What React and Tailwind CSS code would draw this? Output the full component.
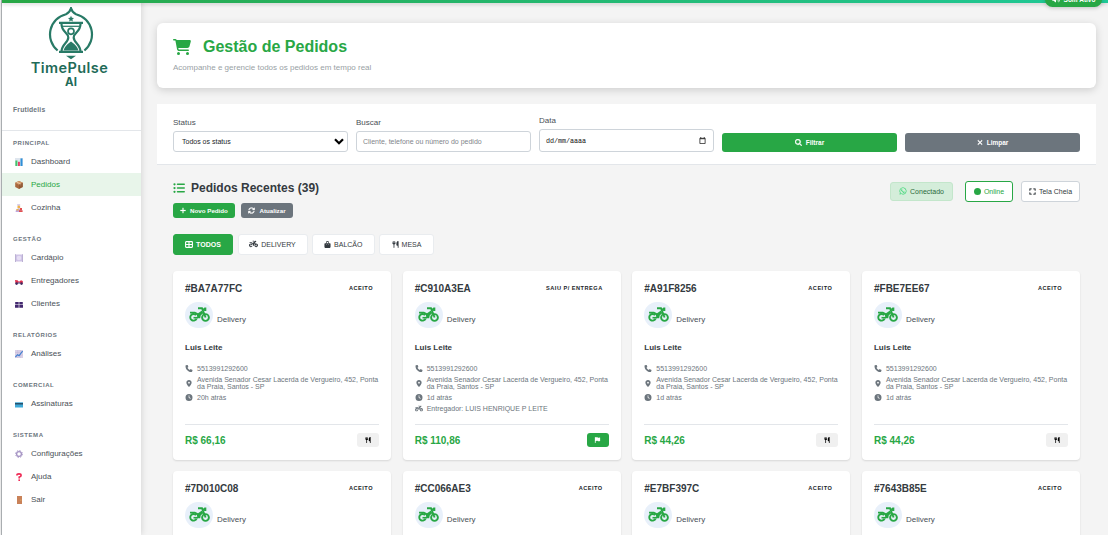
import React from "react";
import {
  FaCartShopping, FaListUl, FaPlus, FaArrowsRotate, FaMotorcycle, FaBagShopping, FaUtensils, FaPhone,
  FaLocationDot, FaClock, FaFlag, FaWhatsapp, FaExpand, FaCircle, FaMagnifyingGlass, FaXmark, FaVolumeHigh,
} from "react-icons/fa6";

function Logo() {
  return (
    <svg className="h-[53px] w-[46px]" viewBox="0 0 46 53" fill="none" stroke="#287a66" strokeWidth="2.200">
      <path d="M9.600 43.500A20.800 20.800 0 0 1 18 7.200Q21.800 5.500 23 1.200Q24.200 5.500 28 7.200A20.800 20.800 0 0 1 36.400 43.500" />
      <path d="M11 15.800h24M11 44.800h24" />
      <path d="M13.500 17c0 8 6.800 8.500 6.800 13.500s-6.800 7-6.800 14M32.500 17c0 8-6.800 8.500-6.800 13.500s6.800 7 6.800 14" />
      <path d="M13 19.300h20" strokeWidth="1.200" />
      <circle cx="23" cy="24.300" r="3" strokeWidth="1.700" />
      <path d="M15.500 43.500q1-4.500 7.500-9q6.500 4.500 7.500 9z" fill="#287a66" stroke="none" />
      <path d="M23 8.800l.9 2 2.100.2-1.600 1.400.5 2.100-1.900-1.100-1.900 1.100.5-2.100-1.600-1.400 2.100-.2z" fill="#287a66" stroke="none" />
      <path d="M18 48.800h10l-5 3.400z" fill="#287a66" stroke="none" />
    </svg>
  );
}

function DeliveryBike() {
  return (
    <svg className="h-[15px] w-[21px] text-[#28a745]" viewBox="0 0 21 15" fill="none" stroke="currentColor" strokeWidth="1.900">
      <path d="M7.600 11.600A3.300 3.300 0 1 1 7.100 8.200" />
      <path d="M4.500 10.700H9" strokeWidth="1.600" />
      <circle cx="16.500" cy="10.500" r="3.400" />
      <path d="M9 1.200h4L16.600 10.500" />
      <path d="M1 4.800h5l3 1.400 4-2.600 1.300 2.600-2.500 2-.6 3H8.600L7.800 8 5.500 6.400H1z" fill="currentColor" stroke="none" />
      <path d="M13.500 2.300L15.500 .5h1.800v3.600h-2z" fill="currentColor" stroke="none" />
    </svg>
  );
}

const glyphs = {
  chart: (
    <>
      <rect width="8" height="8" fill="#dfe6ee" />
      <rect x=".4" y="2.500" width="2" height="5.500" fill="#43c46a" />
      <rect x="3" y="3.800" width="1.900" height="4.200" fill="#e83e6b" />
      <rect x="5.500" y=".4" width="2" height="7.600" fill="#2f8fd8" />
    </>
  ),
  box: (
    <>
      <path d="M4 0l3.800 1.800v4.200L4 8 .2 6V1.800z" fill="#a9683f" />
      <path d="M4 0l3.800 1.800L4 3.800.2 1.800z" fill="#d39a6c" />
      <path d="M1.800 1.100L5.700 3v1.500" stroke="#efd0ac" strokeWidth=".8" fill="none" />
      <path d="M4 3.800V8l3.800-2V1.800z" fill="#86502f" opacity=".6" />
    </>
  ),
  cook: (
    <>
      <path d="M2.200 0h3v2h-3z" fill="#d9cfea" />
      <circle cx="3.800" cy="2.900" r="1.500" fill="#efb24a" />
      <path d="M.6 8q0-3.500 3.200-3.500T7 8z" fill="#bda7e0" />
      <path d="M5 4h2v2H5zM4 6.300h3.600V8H4z" fill="#e2504f" />
      <path d="M1.500 5h2v1.500h-2z" fill="#f0b545" />
    </>
  ),
  plate: (
    <>
      <rect x="1" y=".5" width="6" height="7" fill="#cfc3e6" />
      <circle cx="4" cy="4" r="2.300" fill="#e6def4" />
      <path d="M.5.200V8M7.500.200V8" stroke="#9d8fc0" strokeWidth=".7" />
    </>
  ),
  bike: (
    <>
      <path d="M0 3l2.500.3L4 4.800l2-1.600 1.800.8v2.500H.5z" fill="#e0304f" />
      <circle cx="1.600" cy="6.600" r="1.300" fill="#402b60" />
      <circle cx="6.500" cy="6.600" r="1.300" fill="#402b60" />
      <path d="M3 5.500h2v1H3z" fill="#45a0d8" />
    </>
  ),
  people: (
    <>
      <path d="M.2 2h3.500v2.600H.2zM4.300 2h3.500v2.600H4.300z" fill="#43286f" />
      <path d="M0 7.800V5h3.700v2.800zM4.300 7.800V5H8v2.800z" fill="#43286f" />
    </>
  ),
  trend: (
    <>
      <rect width="8" height="8" fill="#d9d0e6" />
      <path d="M0 2.500h8M0 5h8M2.700 0v8M5.300 0v8" stroke="#c0b4d4" strokeWidth=".4" />
      <path d="M.4 7l2.200-2.300 1.500 1L7.600 1" stroke="#3f7fd0" strokeWidth="1.100" fill="none" />
    </>
  ),
  card: (
    <>
      <rect y="2.300" width="8" height="5.200" fill="#3fa9d8" />
      <rect y="3" width="8" height="1.500" fill="#28506b" />
    </>
  ),
  gear: (
    <>
      <circle cx="4" cy="4" r="2.400" fill="none" stroke="#a594c4" strokeWidth="1.300" />
      <circle cx="4" cy="4" r="3.400" fill="none" stroke="#a594c4" strokeWidth="1" strokeDasharray="1.400 1.270" />
    </>
  ),
  help: (
    <>
      <path d="M1.900 2.500Q1.900.9 4 .9t2.100 1.500Q6.100 3.600 4.200 4.100v1.400" stroke="#ee2a55" strokeWidth="1.600" fill="none" />
      <rect x="3.400" y="6.400" width="1.600" height="1.600" fill="#ee2a55" />
    </>
  ),
  door: (
    <>
      <rect x="2" width="5" height="8" fill="#c98259" />
      <rect x="5.500" y="3.700" width=".8" height=".8" fill="#f3cf6c" />
    </>
  ),
};

const sections = [
  ["PRINCIPAL", [["chart", "Dashboard"], ["box", "Pedidos"], ["cook", "Cozinha"]]],
  ["GESTÃO", [["plate", "Cardápio"], ["bike", "Entregadores"], ["people", "Clientes"]]],
  ["RELATÓRIOS", [["trend", "Análises"]]],
  ["COMERCIAL", [["card", "Assinaturas"]]],
  ["SISTEMA", [["gear", "Configurações"], ["help", "Ajuda"], ["door", "Sair"]]],
];

function Sidebar() {
  return (
    <aside className="z-10 ml-px h-full w-[140px] shrink-0 border-l border-[#a9adb0] bg-white shadow-[1px_0_6px_rgba(0,0,0,0.12)]">
      <div className="flex h-[131px] flex-col border-b border-[#e3e6ea] pt-[7px]">
        <div className="flex w-[138px] flex-col items-center font-['Inter',sans-serif] font-semibold text-[#1f6b58]">
          <Logo />
          <span className="-ml-[3px] h-[15px] text-[14.500px] leading-[16px] tracking-[0.450px]">TimePulse</span>
          <span className="h-[13px] text-[11.500px] leading-[15px] font-bold">AI</span>
        </div>
        <span className="mt-[16px] pl-[11px] text-[6.750px] leading-[12px] font-bold tracking-[0.2px] text-[#6c757d]">Frutidelis</span>
      </div>
      <nav className="flex flex-col gap-[14px] pt-[6px]">
        {sections.map(([label, items]) => (
          <div key={label}>
            <div className="mb-px h-3 pl-[11px] text-[6px] leading-3 font-bold tracking-[0.550px] text-[#6c757d]">{label}</div>
            {items.map(([icon, name]) => (
              <div
                key={name}
                className={
                  "flex h-[23px] items-center gap-2 pl-[13px] text-[8px] " +
                  (name === "Pedidos" ? "bg-[#e8f5ea] text-[#28a745]" : "text-[#495057]")
                }
              >
                <svg viewBox="0 0 8 8" className="mt-px h-2 w-2">{glyphs[icon]}</svg>
                <span>{name}</span>
              </div>
            ))}
          </div>
        ))}
      </nav>
    </aside>
  );
}

function Filters() {
  return (
    <section className="mt-4 flex h-[61px] items-end gap-2 border-b border-[#e3e6ea] bg-white px-4 pb-3 text-[#495057]">
      <div className="flex flex-1 flex-col">
        <span className="mb-[2px] text-[8px] leading-3">Status</span>
        <div className="flex h-[21px] items-center justify-between rounded-[3px] border border-[#ced4da] pt-px pl-2 pr-[3px] text-[7px] text-[#212529]">
          Todos os status
          <svg viewBox="0 0 10 7" className="mb-px h-[7px] w-[10px]" fill="none" stroke="#000" strokeWidth="2.200">
            <path d="M1 1.200l4 4 4-4" />
          </svg>
        </div>
      </div>
      <div className="flex flex-1 flex-col">
        <span className="mb-[2px] text-[8px] leading-3">Buscar</span>
        <div className="flex h-[21px] items-center rounded-[3px] border border-[#ced4da] px-[6px] pt-px text-[7px] text-[#7f858b]">
          Cliente, telefone ou número do pedido
        </div>
      </div>
      <div className="flex flex-1 flex-col">
        <span className="mb-[2px] text-[8px] leading-3">Data</span>
        <div className="flex h-[23px] items-center justify-between rounded-[3px] border border-[#ced4da] px-[6px] pt-px font-['Liberation_Mono',monospace] text-[6.700px] text-[#111]">
          dd/mm/aaaa
          <svg viewBox="0 0 7 8" className="mr-px mb-px h-[7px] w-[7px]" fill="none" stroke="#222">
            <path d="M.5 1.500h6v6h-6zM.5 2h6M1.500 0v1.500M5.500 0v1.500" strokeWidth=".9" />
          </svg>
        </div>
      </div>
      <button className="flex h-[19px] flex-1 items-center justify-center gap-1 rounded-[3px] bg-[#28a745] text-[6.500px] font-bold text-white">
        <FaMagnifyingGlass className="h-[7px] w-[7px]" strokeWidth="30" stroke="#fff" /> Filtrar
      </button>
      <button className="flex h-[19px] flex-1 items-center justify-center gap-1 rounded-[3px] bg-[#6c757d] text-[6.500px] font-bold text-white">
        <FaXmark className="h-[7px] w-[6px]" strokeWidth="40" stroke="#fff" /> Limpar
      </button>
    </section>
  );
}

function ListHeader() {
  return (
    <div className="mt-[15px] flex justify-between">
      <div>
        <h2 className="flex h-4 items-center gap-[6px] text-[12px] font-bold text-[#343a40]">
          <FaListUl className="h-3 w-3 text-[#28a745]" /> Pedidos Recentes (39)
        </h2>
        <div className="mt-[7px] flex gap-[6px] text-[6.200px] font-bold text-white">
          <button className="flex h-[15px] w-[62px] items-center justify-center gap-1 rounded-[3px] bg-[#28a745]">
            <FaPlus className="mb-px h-[7px] w-[6px]" strokeWidth="20" stroke="#fff" /> Novo Pedido
          </button>
          <button className="flex h-[15px] w-[52px] items-center justify-center gap-1 rounded-[3px] bg-[#6c757d]">
            <FaArrowsRotate className="mb-px h-[7px] w-[7px]" strokeWidth="20" stroke="#fff" /> Atualizar
          </button>
        </div>
      </div>
      <div className="mt-px flex h-[21px] items-center text-[7px]">
        <div className="mr-3 flex h-[19px] w-[63px] items-center justify-center gap-[3px] rounded-[3px] border border-[#c3e6cb] bg-[#d4edda] pt-px text-[#2b6b3b]">
          <FaWhatsapp className="mb-[2px] h-[8px] w-[8px] text-[#25d366]" /> Conectado
        </div>
        <div className="mr-2 flex h-[21px] w-12 items-center justify-center gap-[3px] rounded-[3px] border border-[#28a745] bg-white pt-px text-[#28a745]">
          <FaCircle className="mb-[2px] h-[7px] w-[7px]" /> Online
        </div>
        <div className="flex h-[21px] w-[59px] items-center justify-center gap-[3px] rounded-[3px] border border-[#ced4da] bg-white pt-px text-[#343a40]">
          <FaExpand className="mb-[2px] h-[7px] w-[7px]" strokeWidth="20" stroke="currentColor" /> Tela Cheia
        </div>
      </div>
    </div>
  );
}

function GridIcon() {
  return (
    <svg viewBox="0 0 8 7" className="mb-[2px] h-[7px] w-2" fill="none" stroke="currentColor" strokeWidth="1.100">
      <rect x=".6" y=".6" width="6.800" height="5.800" rx=".6" />
      <path d="M4 .5v6M.5 3.500h7" />
    </svg>
  );
}

function Tabs() {
  const tab = "flex h-[21px] items-center justify-center gap-[3px] rounded-[3px] border pt-px text-[7px] ";
  const idle = tab + "border-[#e9ecef] bg-white text-[#343a40] ";
  return (
    <div className="mt-4 flex gap-[4.500px]">
      <div className={tab + "w-[60px] border-[#28a745] bg-[#28a745] text-white font-bold text-[6.500px]"}><GridIcon /> TODOS</div>
      <div className={idle + "w-[70px]"}><FaMotorcycle className="mb-[2px] h-2 w-[9px]" /> DELIVERY</div>
      <div className={idle + "w-[62.500px]"}><FaBagShopping className="mb-[2px] h-[7px] w-[7px]" /> BALCÃO</div>
      <div className={idle + "w-[55px]"}><FaUtensils className="mb-[2px] h-[7px] w-[7px]" /> MESA</div>
    </div>
  );
}

function Row({ Icon, children }) {
  return (
    <div className="flex items-center gap-1">
      <span className="flex w-2 shrink-0 justify-center"><Icon className="h-[7px] w-[8px]" /></span>
      <span className="whitespace-nowrap">{children}</span>
    </div>
  );
}

function Card({ id, status = "ACEITO", age, price, driver }) {
  return (
    <article className="flex h-[188.500px] flex-col rounded-[4px] bg-white px-3 pt-[10px] shadow-[0_1px_2px_rgba(0,0,0,0.12)]">
      <div className="flex h-4 items-center justify-between">
        <h3 className="-mt-px text-[10px] font-bold text-[#343a40]">{id}</h3>
        <span className="-mt-px pr-[6px] text-[5.600px] font-bold tracking-[0.500px] text-[#212529]">{status}</span>
      </div>
      <div className="mt-[5px] flex h-[26px] items-center gap-1">
        <span className="flex h-[26px] w-7 items-center justify-center rounded-full bg-[#e8f0fa] pb-[2px]">
          <DeliveryBike />
        </span>
        <span className="mt-[9px] text-[8px] text-[#495057]">Delivery</span>
      </div>
      <div className="mt-[14px] h-3 text-[8px] leading-3 font-bold text-[#343a40]">Luis Leite</div>
      <div className="mt-[11px] flex h-[52px] flex-col gap-[4px] text-[7.030px] leading-[7px] text-[#6c757d]">
        <Row Icon={FaPhone}>5513991292600</Row>
        <Row Icon={FaLocationDot}>Avenida Senador Cesar Lacerda de Vergueiro, 452, Ponta<br />da Praia, Santos - SP</Row>
        <Row Icon={FaClock}>{age}</Row>
        {driver && <Row Icon={FaMotorcycle}>Entregador: {driver}</Row>}
      </div>
      <div className="mt-[7px] flex items-center justify-between border-t border-[#e3e6ea] pt-2">
        <span className="mt-px text-[10px] leading-[14px] font-bold text-[#28a745]">{price}</span>
        <span className={"-mt-px flex h-[14px] w-[22px] items-center justify-center rounded-[3px] " + (driver ? "bg-[#28a745] text-white" : "bg-[#f0f0f0] text-black")}>
          {driver ? <FaFlag className="h-[6px] w-[7px]" /> : <FaUtensils className="h-[6px] w-[6px]" />}
        </span>
      </div>
    </article>
  );
}

const orders = [
  { id: "#BA7A77FC", age: "20h atrás", price: "R$ 66,16" },
  { id: "#C910A3EA", status: "SAIU P/ ENTREGA", age: "1d atrás", price: "R$ 110,86", driver: "LUIS HENRIQUE P LEITE" },
  { id: "#A91F8256", age: "1d atrás", price: "R$ 44,26" },
  { id: "#FBE7EE67", age: "1d atrás", price: "R$ 44,26" },
  { id: "#7D010C08", age: "1d atrás", price: "R$ 44,26" },
  { id: "#CC066AE3", age: "1d atrás", price: "R$ 44,26" },
  { id: "#E7BF397C", age: "1d atrás", price: "R$ 44,26" },
  { id: "#7643B85E", age: "1d atrás", price: "R$ 44,26" },
];

export default function App() {
  return (
    <div className="relative flex h-[535px] w-[1108px] overflow-hidden bg-[#f4f4f4] font-['Liberation_Sans',Arial,sans-serif]">
      <Sidebar />
      <main className="w-[955px] shrink-0 pl-4 pt-[23px]">
        <header className="flex h-[65px] flex-col rounded-[6px] bg-white px-4 pt-[14px] shadow-[0_2px_9px_rgba(0,0,0,0.16)]">
          <h1 className="flex h-5 items-center gap-[12px] text-[16px] font-bold text-[#28a745]">
            <FaCartShopping className="h-4 w-[18px]" /> Gestão de Pedidos
          </h1>
          <p className="mt-[5px] text-[8px] leading-3 text-[#999fa5]">Acompanhe e gerencie todos os pedidos em tempo real</p>
        </header>
        <Filters />
        <div className="px-4">
          <ListHeader />
          <Tabs />
          <div className="mt-4 grid grid-cols-4 gap-[11.650px]">
            {orders.map((o) => <Card key={o.id} {...o} />)}
          </div>
        </div>
      </main>
      <div className="absolute top-0 right-0 left-[2px] z-20 h-[3px] bg-linear-to-r from-[#28a745] to-[#20c997] shadow-[0_1px_4px_rgba(0,0,0,0.2)]" />
      <div className="absolute -top-[8px] left-[1045px] z-30 flex h-[15px] w-[57px] items-center justify-center gap-1 rounded-full bg-[#28a745] text-[6.500px] font-bold text-white shadow-[0_1px_4px_rgba(0,0,0,0.2)]">
        <FaVolumeHigh className="h-[7px] w-2" /> Som Ativo
      </div>
    </div>
  );
}
